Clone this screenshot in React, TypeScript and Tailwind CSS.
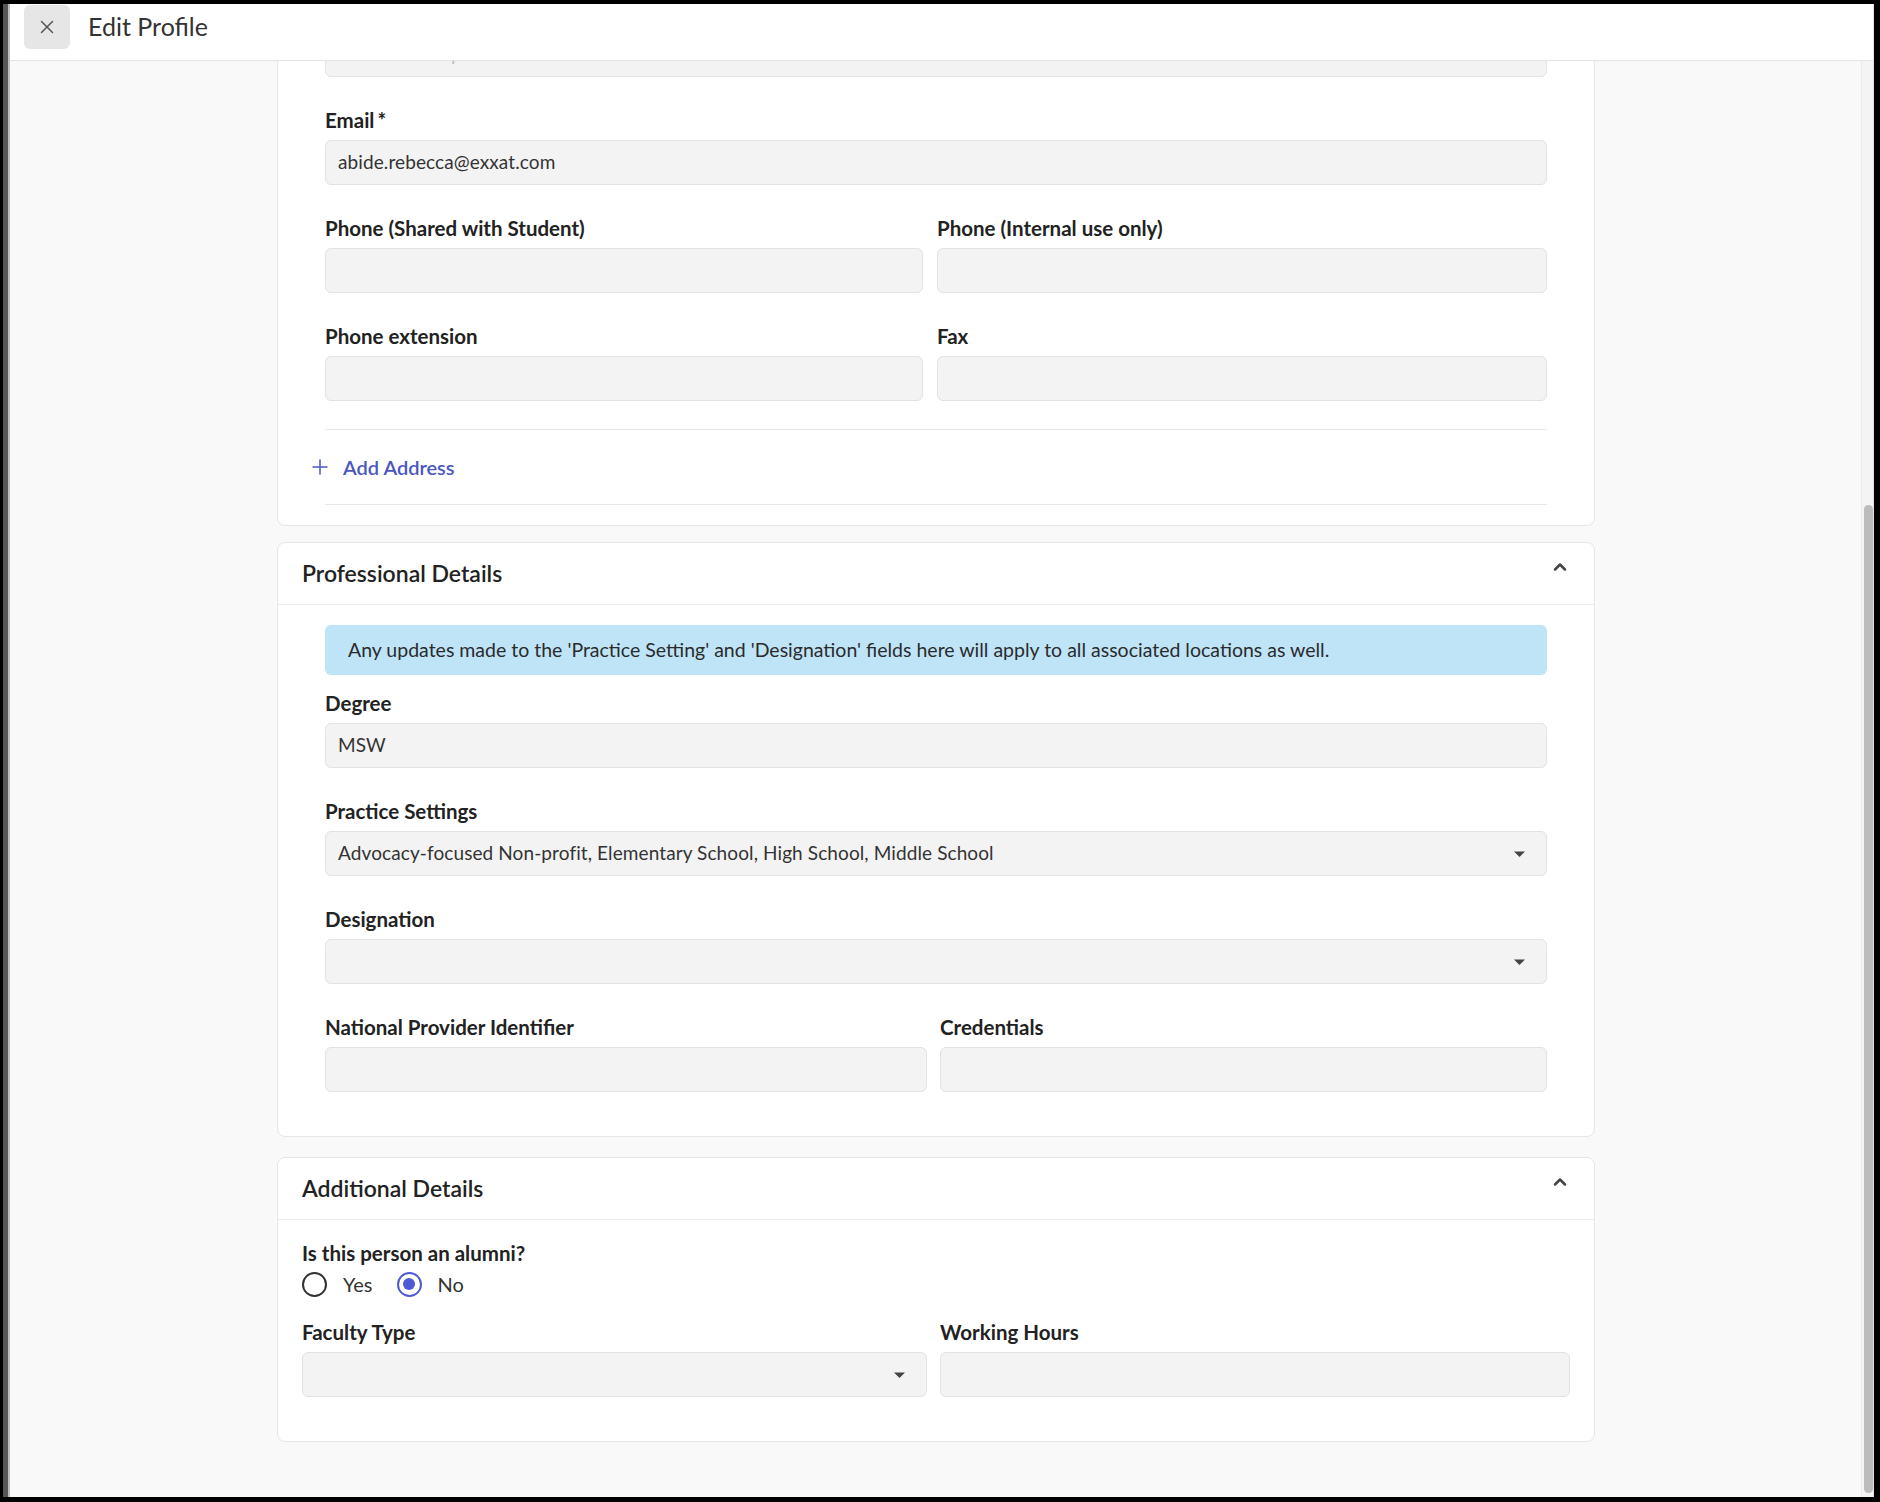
import React from "react";
import { X, Plus, ChevronUp } from "lucide-react";

const font = "[font-family:Lato,'Noto_Sans',sans-serif]";

function Caret() {
  return (
    <svg width="13" height="8" viewBox="0 0 13 8" className="shrink-0">
      <path d="M1 1.5h11L6.5 7z" fill="#444" />
    </svg>
  );
}

function Input({ value, select, muted }: { value?: string; select?: boolean; muted?: boolean }) {
  return (
    <div className="flex h-[45px] items-center justify-between rounded-[6px] border border-[#e3e3e3] bg-[#f3f3f3] pl-[12px] pr-[20px]">
      <span className={`truncate text-[19px] tracking-[0.1px] ${muted ? "text-[#bbb]" : "text-[#333]"}`}>{value}</span>
      {select && <Caret />}
    </div>
  );
}

function Label({ children }: { children: React.ReactNode }) {
  return <div className="h-[22px] text-[20.5px] font-bold leading-[22px] text-[#222]">{children}</div>;
}

function Field({ label, value, select, required }: { label: string; value?: string; select?: boolean; required?: boolean }) {
  return (
    <div className="flex flex-col gap-[9px]">
      <Label>
        {label}
        {required && <span className="ml-[3px]">*</span>}
      </Label>
      <Input value={value} select={select} />
    </div>
  );
}

function CardHeader({ title }: { title: string }) {
  return (
    <div className="flex h-[62px] items-center justify-between border-b border-[#ebebeb] pl-[24px] pr-[24px]">
      <span className="text-[23px] font-semibold text-[#222]">{title}</span>
      <ChevronUp size={20} strokeWidth={3} className="-mt-[14px] text-[#444]" />
    </div>
  );
}

function Radio({ label, checked }: { label: string; checked?: boolean }) {
  return (
    <div className="flex items-center gap-[16px]">
      {checked ? (
        <span className="flex h-[25px] w-[25px] items-center justify-center rounded-full border-2 border-[#4f5bd5]">
          <span className="h-[12px] w-[12px] rounded-full bg-[#4f5bd5]" />
        </span>
      ) : (
        <span className="h-[25px] w-[25px] rounded-full border-2 border-[#333]" />
      )}
      <span className="text-[20px] text-[#333]">{label}</span>
    </div>
  );
}

export default function App() {
  return (
    <div className={`flex h-[1502px] w-[1880px] bg-black pb-[5px] pl-[3px] pr-[6px] pt-[4px] ${font}`}>
      {/* window behind, peeking at the left */}
      <div className="w-[7px] shrink-0 border-r-2 border-[#bdbdbd] bg-[#575757]" />
      <div className="flex min-w-0 flex-1 flex-col border-r border-[#e0e0e0]">
        <header className="flex h-[57px] shrink-0 items-start gap-[18px] border-b border-[#e4e4e4] bg-white pl-[14px] pt-[1px]">
          <button className="flex h-[44px] w-[46px] items-center justify-center rounded-[6px] bg-[#e6e6e6]">
            <X size={22} strokeWidth={1.6} className="text-[#555]" />
          </button>
          <h1 className="pt-[6px] text-[25px] leading-[30px] text-[#333]">Edit Profile</h1>
        </header>

        <div className="flex min-h-0 flex-1 bg-[#f9f9f9]">
          <div className="min-w-0 flex-1 overflow-hidden">
            <div className="ml-[267px] flex w-[1318px] flex-col">
              {/* Contact details */}
              <section className="-mt-[60px] rounded-[8px] border border-[#e6e6e6] bg-white px-[47px] pb-[20px] pt-[30px]">
                <div className="flex flex-col gap-[32px]">
                  <Input value="Clinical Preceptor" muted />
                  <Field label="Email" required value="abide.rebecca@exxat.com" />
                  <div className="grid grid-cols-[598px_1fr] gap-x-[14px]">
                    <Field label="Phone (Shared with Student)" />
                    <Field label="Phone (Internal use only)" />
                  </div>
                  <div className="grid grid-cols-[598px_1fr] gap-x-[14px]">
                    <Field label="Phone extension" />
                    <Field label="Fax" />
                  </div>
                </div>
                <div className="mt-[28px] border-t border-[#e8e8e8]" />
                <div className="-ml-[17px] flex h-[74px] items-center gap-[11px]">
                  <Plus size={24} strokeWidth={1.5} className="text-[#4a57c0]" />
                  <span className="text-[20px] font-semibold text-[#4a57c0]">Add Address</span>
                </div>
                <div className="border-t border-[#e8e8e8]" />
              </section>

              {/* Professional details */}
              <section className="mt-[16px] rounded-[8px] border border-[#e6e6e6] bg-white">
                <CardHeader title="Professional Details" />
                <div className="flex flex-col px-[47px] pb-[44px] pt-[20px]">
                  <div className="flex h-[50px] items-center rounded-[6px] bg-[#bfe4f8] px-[23px] text-[19.5px] text-[#2b2b2b]">
                    Any updates made to the 'Practice Setting' and 'Designation' fields here will apply to all associated locations as well.
                  </div>
                  <div className="mt-[17px] flex flex-col gap-[32px]">
                    <Field label="Degree" value="MSW" />
                    <Field
                      label="Practice Settings"
                      select
                      value="Advocacy-focused Non-profit, Elementary School, High School, Middle School"
                    />
                    <Field label="Designation" select />
                    <div className="grid grid-cols-[602px_1fr] gap-x-[13px]">
                      <Field label="National Provider Identifier" />
                      <Field label="Credentials" />
                    </div>
                  </div>
                </div>
              </section>

              {/* Additional details */}
              <section className="mt-[20px] rounded-[8px] border border-[#e6e6e6] bg-white">
                <CardHeader title="Additional Details" />
                <div className="flex flex-col px-[24px] pb-[44px] pt-[22px]">
                  <Label>Is this person an alumni?</Label>
                  <div className="mt-[7px] flex h-[26px] items-center gap-[24px]">
                    <Radio label="Yes" />
                    <Radio label="No" checked />
                  </div>
                  <div className="mt-[24px] grid grid-cols-[625px_1fr] gap-x-[13px]">
                    <Field label="Faculty Type" select />
                    <Field label="Working Hours" />
                  </div>
                </div>
              </section>
            </div>
          </div>

          {/* scrollbar */}
          <div className="flex w-[12px] shrink-0 flex-col border-l border-[#ececec] bg-[#f4f4f4] pb-[4px] pl-[2px] pt-[444px]">
            <div className="flex-1 rounded-full bg-[#bcbcbc]" />
          </div>
        </div>
      </div>
    </div>
  );
}
